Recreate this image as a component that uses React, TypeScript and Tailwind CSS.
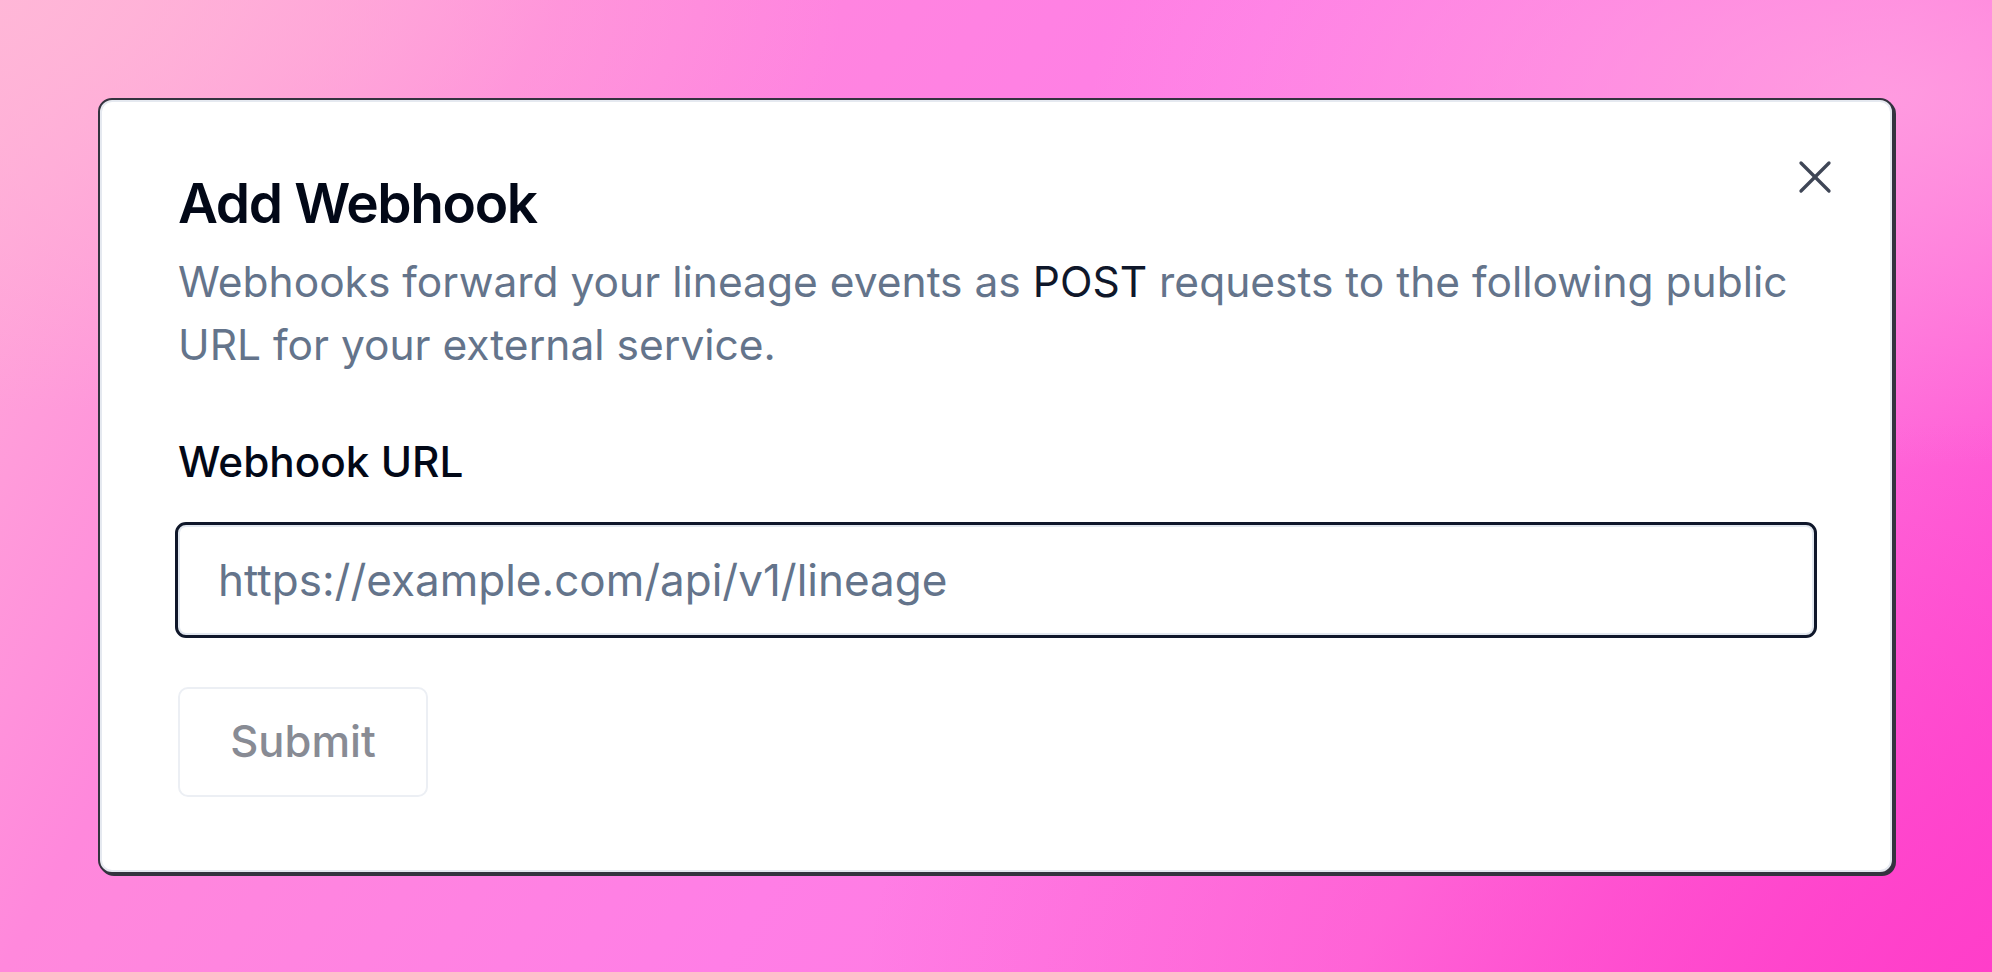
import React from "react";

export default function App() {
  return (
    <div
      className="relative flex h-[972px] w-[1992px] items-center justify-center overflow-hidden"
      style={{ fontFamily: "Inter, 'Noto Sans', sans-serif" }}
    >
      <div className="absolute inset-0 bg-[linear-gradient(120deg,#ffaed8_0%,#ff88dc_22%,#ff7ee6_50%,#ff78de_75%,#ff45cf_100%)]" />
      <div className="absolute inset-0 bg-[radial-gradient(ellipse_at_0%_0%,rgba(255,185,215,0.8)_0%,rgba(255,185,215,0)_30%)]" />
      <div className="absolute inset-0 bg-[radial-gradient(ellipse_at_100%_100%,rgba(255,60,200,0.8)_0%,rgba(255,60,200,0)_40%)]" />
      <div className="absolute inset-0 bg-[radial-gradient(ellipse_at_95%_10%,rgba(255,170,225,0.7)_0%,rgba(255,170,225,0)_30%)]" />

      <div className="relative w-[1796px] rounded-[14px] border-2 border-[#34333f] bg-white pb-[75px] pl-[78px] pr-[75px] pt-[76px] shadow-[inset_0_0_0_2px_#e5e9f0,2px_2px_0_0_#34333f]">
        <button className="absolute right-[58px] top-[58px] flex h-[38px] w-[38px] items-center justify-center text-[#3f4656]">
          <svg width="38" height="38" viewBox="0 0 38 38" fill="none" stroke="currentColor" strokeWidth="3.3" strokeLinecap="round">
            <line x1="5" y1="5" x2="33" y2="33" />
            <line x1="33" y1="5" x2="5" y2="33" />
          </svg>
        </button>

        <h2 className="text-[55px] font-semibold leading-[54px] tracking-tight text-[#020817]">Add Webhook</h2>
        <p className="mt-[20px] text-[42.5px] leading-[63px] text-[#64748b]">
          Webhooks forward your lineage events as <span className="text-[#0f172a]">POST</span> requests to the following public URL for your external service.
        </p>

        <label className="mt-[65px] block text-[42.3px] font-medium leading-[42px] text-[#020817]">Webhook URL</label>

        <div className="-ml-[3px] mt-[39px] flex h-[116px] w-[calc(100%+3px)] items-center rounded-[11px] border-[3px] border-[#0f172a] bg-white pl-[40px] shadow-[inset_0_0_0_2px_#e2e8f0]">
          <span className="text-[44px] leading-none text-[#64748b]">https://example.com/api/v1/lineage</span>
        </div>

        <button className="mt-[49px] flex h-[110px] w-[250px] items-center justify-center rounded-[10px] border-2 border-[#eceff4] bg-white text-[43.5px] font-medium text-[#888b94]">
          Submit
        </button>
      </div>
    </div>
  );
}
